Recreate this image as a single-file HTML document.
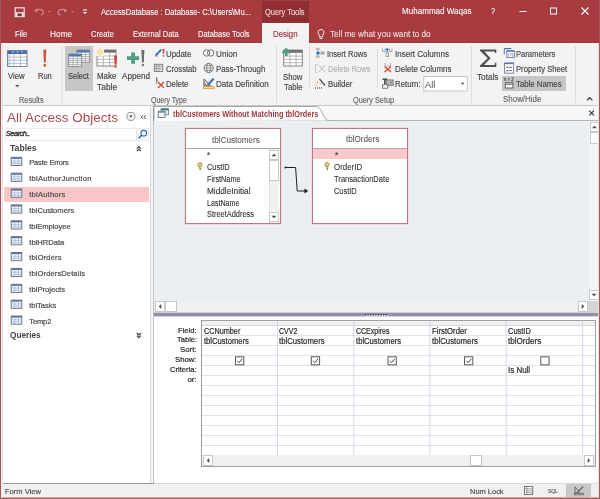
<!DOCTYPE html>
<html><head><meta charset="utf-8">
<style>
*{margin:0;padding:0;box-sizing:border-box}
html,body{width:600px;height:499px;overflow:hidden;background:#fff;font-family:"Liberation Sans",sans-serif;color:#333;position:relative}
.a{position:absolute}
.t{position:absolute;white-space:pre;line-height:1;transform-origin:0 0}
svg{position:absolute;overflow:visible}

</style></head><body>
<div class="a" style="left:0px;top:0px;width:600px;height:43px;background:#a73b3f;"></div>
<div class="a" style="left:262px;top:1px;width:47px;height:22px;background:#8f2f33;"></div>
<div class="a" style="left:262px;top:23px;width:47px;height:20px;background:#f3f3f3;"></div>
<div class="a" style="left:0px;top:43px;width:600px;height:62px;background:#f3f3f3;"></div>
<div class="a" style="left:0px;top:105px;width:600px;height:1px;background:#c8c8c8;"></div>
<div class="a" style="left:65px;top:46px;width:28px;height:45px;background:#c6c6c6;"></div>
<div class="a" style="left:502px;top:76px;width:64px;height:15px;background:#c6c6c6;"></div>
<div class="a" style="left:2px;top:106px;width:148px;height:378px;background:#fff;"></div>
<div class="a" style="left:150px;top:106px;width:1px;height:378px;background:#d4d4d4;"></div>
<div class="a" style="left:151px;top:106px;width:2px;height:378px;background:#f4f4f4;"></div>
<div class="a" style="left:153px;top:106px;width:1px;height:15px;background:#8c8c8c;"></div>
<div class="a" style="left:153px;top:121px;width:1px;height:363px;background:#c4c4c4;"></div>
<div class="a" style="left:4px;top:187px;width:145px;height:15px;background:#f9c6c8;"></div>
<div class="a" style="left:5px;top:128px;width:144px;height:13px;background:#fff;border:1px solid #ececec"></div>
<div class="a" style="left:136px;top:129px;width:12px;height:11px;background:#f7f7f7;border-left:1px solid #e6e6e6"></div>
<div class="a" style="left:154px;top:106px;width:444px;height:15px;background:#f8f8f8;"></div>
<div class="a" style="left:154px;top:120px;width:444px;height:1px;background:#b4b4b4;"></div>
<div class="a" style="left:154px;top:121px;width:435px;height:180px;background:#eceff2;"></div>
<div class="a" style="left:589px;top:121px;width:10px;height:180px;background:#f4f4f4;"></div>
<div class="a" style="left:590px;top:122px;width:10px;height:10px;background:#fff;border:1px solid #c8c8c8"></div>
<div class="a" style="left:590px;top:132px;width:10px;height:12px;background:#fff;border:1px solid #c8c8c8"></div>
<div class="a" style="left:589px;top:290px;width:10px;height:10px;background:#fff;border:1px solid #c8c8c8"></div>
<div class="a" style="left:154px;top:301px;width:435px;height:11px;background:#f0f0f0;"></div>
<div class="a" style="left:155px;top:301px;width:10px;height:11px;background:#fff;border:1px solid #c8c8c8"></div>
<div class="a" style="left:165px;top:301px;width:12px;height:11px;background:#fff;border:1px solid #c8c8c8"></div>
<div class="a" style="left:578px;top:301px;width:10px;height:11px;background:#fff;border:1px solid #c8c8c8"></div>
<div class="a" style="left:588px;top:301px;width:10px;height:11px;background:#d4d4d4;"></div>
<div class="a" style="left:154px;top:312px;width:444px;height:1px;background:#cfcddc;"></div>
<div class="a" style="left:154px;top:313px;width:444px;height:3px;background:#928fab;"></div>
<div class="a" style="left:154px;top:316px;width:444px;height:1px;background:#d2d0de;"></div>
<div class="a" style="left:154px;top:317px;width:444px;height:167px;background:#fff;"></div>
<div class="a" style="left:185px;top:128px;width:96px;height:96px;background:#fff;border:1px solid #b07c80;box-shadow:0 0 0 1px #f3dcdc"></div>
<div class="a" style="left:186px;top:148px;width:94px;height:1px;background:#a8a8a8;"></div>
<div class="a" style="left:312px;top:128px;width:96px;height:96px;background:#fff;border:1px solid #b07c80;box-shadow:0 0 0 1px #f3dcdc"></div>
<div class="a" style="left:313px;top:148px;width:94px;height:1px;background:#a8a8a8;"></div>
<div class="a" style="left:313px;top:149px;width:94px;height:10px;background:#fbc9cb;"></div>
<div class="a" style="left:269px;top:149px;width:10px;height:74px;background:#f2f2f2;border-left:1px solid #e0e0e0"></div>
<div class="a" style="left:269px;top:150px;width:10px;height:10px;background:#fff;border:1px solid #c8c8c8"></div>
<div class="a" style="left:269px;top:160px;width:10px;height:21px;background:#fff;border:1px solid #c8c8c8"></div>
<div class="a" style="left:269px;top:212px;width:10px;height:10px;background:#fff;border:1px solid #c8c8c8"></div>
<div class="a" style="left:201px;top:320px;width:395px;height:147px;background:#fff;border:1px solid #a0a0a0"></div>
<div class="a" style="left:202px;top:321px;width:393px;height:5px;background:#f0f0f0;"></div>
<div class="a" style="left:202px;top:325px;width:393px;height:1px;background:#d6d6de;"></div>
<div class="a" style="left:202px;top:455px;width:393px;height:11px;background:#f0f0f0;"></div>
<div class="a" style="left:203px;top:455px;width:10px;height:11px;background:#fff;border:1px solid #c8c8c8"></div>
<div class="a" style="left:470px;top:455px;width:12px;height:11px;background:#fff;border:1px solid #c8c8c8"></div>
<div class="a" style="left:584px;top:455px;width:10px;height:11px;background:#fff;border:1px solid #c8c8c8"></div>
<div class="a" style="left:0px;top:483px;width:154px;height:1px;background:#9a9a9a;"></div>
<div class="a" style="left:154px;top:483px;width:446px;height:1px;background:#d8d8d8;"></div>
<div class="a" style="left:0px;top:484px;width:600px;height:14px;background:#f0f0f0;"></div>
<div class="a" style="left:566px;top:484px;width:25px;height:14px;background:#c8c8c8;"></div>
<div class="a" style="left:0px;top:498px;width:600px;height:1px;background:#a3585d;"></div>
<div class="a" style="left:0px;top:497px;width:600px;height:1px;background:#d9a9ab;"></div>
<div class="a" style="left:2px;top:43px;width:1px;height:441px;background:#e4e4e4;"></div>
<div class="a" style="left:1px;top:43px;width:1px;height:455px;background:#f6eeee;"></div>
<div class="a" style="left:0px;top:0px;width:1px;height:499px;background:#a3585d;"></div>
<div class="a" style="left:598px;top:43px;width:1px;height:455px;background:#f0dede;"></div>
<div class="a" style="left:599px;top:0px;width:1px;height:499px;background:#a3585d;"></div>
<svg width="600" height="499" style="left:0;top:0;will-change:transform"><rect x="15.2" y="7.8" width="9" height="8.8" fill="none" stroke="#f4e4e4" stroke-width="1.2"/><rect x="15.8" y="12.2" width="7.8" height="4" fill="#f8eeee"/><rect x="17.4" y="13.4" width="4.4" height="2.8" fill="#7a3a3c"/><path d="M35.2 10.6 C38 8.6 42.5 9 43.3 11.6 C43.8 13.3 42.6 14.6 41 15.3" fill="none" stroke="#d68587" stroke-width="1.2"/><path d="M34 10.8 L37.6 8.6 L37.2 12.6z" fill="#d68587"/><path d="M48 11 h2.6 l-1.3 1.4z" fill="#d68587"/><path d="M66.3 10.6 C63.5 8.6 59 9 58.2 11.6 C57.7 13.3 58.9 14.6 60.5 15.3" fill="none" stroke="#d68587" stroke-width="1.2"/><path d="M67.5 10.8 L63.9 8.6 L64.3 12.6z" fill="#d68587"/><path d="M71.3 11 h2.6 l-1.3 1.4z" fill="#d68587"/><path d="M83 10 h4" stroke="#fff" stroke-width="1"/><path d="M83 12 h4 l-2 2z" fill="#fff"/><path d="M519.5 11.5 h7" stroke="#fff" stroke-width="1"/><rect x="550.5" y="8" width="6" height="6" fill="none" stroke="#fff" stroke-width="1"/><path d="M581.5 7.5 l7 7 M588.5 7.5 l-7 7" stroke="#fff" stroke-width="1.1"/><path d="M321 29.5 a3 3 0 0 1 2.2 5 l-0.6 1.2 v1.3 h-3.2 v-1.3 l-0.6 -1.2 a3 3 0 0 1 2.2 -5z M319.6 38.5 h2.8" fill="none" stroke="#fff" stroke-width="0.9"/><path d="M62 46 V103" stroke="#dcdcdc" stroke-width="1"/><path d="M276.5 46 V103" stroke="#dcdcdc" stroke-width="1"/><path d="M309.5 46 V87" stroke="#dcdcdc" stroke-width="1"/><path d="M471.5 46 V103" stroke="#dcdcdc" stroke-width="1"/><path d="M575.5 46 V103" stroke="#dcdcdc" stroke-width="1"/><path d="M377.5 49 V88" stroke="#dcdcdc" stroke-width="1"/><rect x="7.5" y="50.5" width="19.5" height="16" fill="#fff"/><rect x="7.5" y="54.0" width="3" height="12.5" fill="#d5e1f0"/><rect x="7.5" y="50.5" width="19.5" height="3.5" fill="#4a6ea8"/><path d="M7.5 57.12 H27.0" stroke="#a4b0c4" stroke-width="0.8"/><path d="M7.5 60.25 H27.0" stroke="#a4b0c4" stroke-width="0.8"/><path d="M7.5 63.38 H27.0" stroke="#a4b0c4" stroke-width="0.8"/><path d="M14.00 54.0 V66.5" stroke="#a4b0c4" stroke-width="0.8"/><path d="M20.50 54.0 V66.5" stroke="#a4b0c4" stroke-width="0.8"/><rect x="7.5" y="50.5" width="19.5" height="16" fill="none" stroke="#6c7c96" stroke-width="0.9"/><path d="M12 51.5 h2 l-1 1.2z M16.5 51.5 h2 l-1 1.2z M21 51.5 h2 l-1 1.2z" fill="#fff"/><path d="M15.2 84.9 h4.2 l-2.1 2.5z" fill="#555"/><path d="M43.3 49.8 h3 l-0.6 12.8 h-1.8z" fill="#d35230"/><circle cx="44.8" cy="65.3" r="1.4" fill="#d35230"/><rect x="77" y="50" width="12.7" height="12.3" fill="#fff"/><rect x="77" y="50" width="12.7" height="2.6" fill="#4677bd"/><path d="M77 54.54 H89.7" stroke="#a2a2a2" stroke-width="0.8"/><path d="M77 56.48 H89.7" stroke="#a2a2a2" stroke-width="0.8"/><path d="M77 58.42 H89.7" stroke="#a2a2a2" stroke-width="0.8"/><path d="M77 60.36 H89.7" stroke="#a2a2a2" stroke-width="0.8"/><path d="M81.23 52.6 V62.3" stroke="#a2a2a2" stroke-width="0.8"/><path d="M85.47 52.6 V62.3" stroke="#a2a2a2" stroke-width="0.8"/><rect x="77" y="50" width="12.7" height="12.3" fill="none" stroke="#858585" stroke-width="0.9"/><rect x="68.7" y="54" width="13" height="12.5" fill="#fff"/><rect x="68.7" y="54" width="13" height="2.6" fill="#4677bd"/><path d="M68.7 58.58 H81.7" stroke="#a2a2a2" stroke-width="0.8"/><path d="M68.7 60.56 H81.7" stroke="#a2a2a2" stroke-width="0.8"/><path d="M68.7 62.54 H81.7" stroke="#a2a2a2" stroke-width="0.8"/><path d="M68.7 64.52 H81.7" stroke="#a2a2a2" stroke-width="0.8"/><path d="M73.03 56.6 V66.5" stroke="#a2a2a2" stroke-width="0.8"/><path d="M77.37 56.6 V66.5" stroke="#a2a2a2" stroke-width="0.8"/><rect x="68.7" y="54" width="13" height="12.5" fill="none" stroke="#858585" stroke-width="0.9"/><rect x="97" y="50" width="19" height="16" fill="#fff"/><rect x="97" y="50" width="19" height="2.6" fill="#6e6e6e"/><path d="M97 55.95 H116" stroke="#a6a6a6" stroke-width="0.8"/><path d="M97 59.30 H116" stroke="#a6a6a6" stroke-width="0.8"/><path d="M97 62.65 H116" stroke="#a6a6a6" stroke-width="0.8"/><path d="M103.33 52.6 V66" stroke="#a6a6a6" stroke-width="0.8"/><path d="M109.67 52.6 V66" stroke="#a6a6a6" stroke-width="0.8"/><rect x="97" y="50" width="19" height="16" fill="none" stroke="#7c7c7c" stroke-width="0.9"/><rect x="95.5" y="47.5" width="8.6" height="8.6" fill="#f3f3f3"/><circle cx="100.1" cy="51.9" r="2.3" fill="#f6e4a0"/><path d="M100.1 48 V55.8 M96.2 51.9 H104 M97.4 49.2 L102.8 54.6 M102.8 49.2 L97.4 54.6" stroke="#efd98c" stroke-width="1"/><circle cx="100.1" cy="51.9" r="1.3" fill="#fbeec0"/><path d="M114 55.6 h3.1 l-0.6 9 h-1.9z" fill="#cf4a32"/><circle cx="115.5" cy="66.6" r="1.2" fill="#cf4a32"/><path d="M131.2 52.5 h3.8 v3.8 h4.1 v3.7 h-4.1 v3.7 h-3.8 v-3.7 h-4.2 v-3.7 h4.2z" fill="#4e9d80"/><path d="M141.4 50 h3 l-0.6 12.6 h-1.8z" fill="#6d6d6d"/><circle cx="142.9" cy="65.1" r="1.2" fill="#6d6d6d"/><path d="M154.5 57 L158 53.5 L158 57z" fill="#c8c8c8"/><path d="M155.5 55.5 L161.3 49.6" stroke="#3a6fbf" stroke-width="1.8"/><path d="M162.5 49 h2 l-0.4 4.8 h-1.2z" fill="#e04040"/><circle cx="163.5" cy="55.8" r="0.9" fill="#e04040"/><rect x="154.3" y="64.3" width="8.4" height="7.2" fill="#e8e8e8" stroke="#7b7b7b" stroke-width="0.9"/><path d="M154.3 66.2 H162.7 M156.4 64.3 V71.5 M158.9 64.3 V71.5 M154.3 68.7 H162.7" stroke="#8a8a8a" stroke-width="0.7"/><path d="M156 77.5 h1.4 v4.7 h-1.4z" fill="#707070"/><circle cx="156.7" cy="83.5" r="0.7" fill="#707070"/><path d="M158 82 L164 88 M164 82 L158 88" stroke="#d6452f" stroke-width="1.3"/><circle cx="206.6" cy="53" r="3.2" fill="none" stroke="#777" stroke-width="1"/><circle cx="210.7" cy="53" r="3.2" fill="none" stroke="#777" stroke-width="1"/><circle cx="208.7" cy="68" r="4.6" fill="none" stroke="#777" stroke-width="0.9"/><ellipse cx="208.7" cy="68" rx="2" ry="4.6" fill="none" stroke="#777" stroke-width="0.8"/><path d="M204.1 68 H213.3 M205 65.5 H212.4 M205 70.5 H212.4" stroke="#777" stroke-width="0.7"/><path d="M204 86 V79 L210.5 86z M204 82.5 L207 86" fill="none" stroke="#555" stroke-width="1"/><path d="M207.6 85 L213.6 78.8" stroke="#2f5f9f" stroke-width="2.2"/><path d="M207.6 85 L213.6 78.8" stroke="#5a90d0" stroke-width="1"/><rect x="203.6" y="86.6" width="10.6" height="2" fill="#f6d8b0" stroke="#e39a48" stroke-width="0.9"/><rect x="283.7" y="50" width="18.6" height="16" fill="#fff"/><rect x="283.7" y="50" width="18.6" height="2.8" fill="#6e6e6e"/><path d="M283.7 56.10 H302.3" stroke="#a6a6a6" stroke-width="0.8"/><path d="M283.7 59.40 H302.3" stroke="#a6a6a6" stroke-width="0.8"/><path d="M283.7 62.70 H302.3" stroke="#a6a6a6" stroke-width="0.8"/><path d="M289.90 52.8 V66" stroke="#a6a6a6" stroke-width="0.8"/><path d="M296.10 52.8 V66" stroke="#a6a6a6" stroke-width="0.8"/><rect x="283.7" y="50" width="18.6" height="16" fill="none" stroke="#7c7c7c" stroke-width="0.9"/><path d="M285 48.3 h2.6 v2.6 h2.6 v2.6 h-2.6 v2.6 h-2.6 v-2.6 h-2.7 v-2.6 h2.7z" fill="#4e9d80"/><rect x="316" y="47.8" width="3.6" height="2.6" fill="#b8b8b8"/><rect x="316" y="55.3" width="3.6" height="2.6" fill="#b8b8b8"/><rect x="320.5" y="51.5" width="4" height="3" fill="#a8a8a8"/><path d="M318 50.8 l2 2.2 l-2 2.2 l-2 -2.2z" fill="#2f6fc0"/><path d="M317.5 64.5 h-2 v8 h2" fill="none" stroke="#c4c4c4" stroke-width="1"/><path d="M319 65 L325 72 M325 65 L319 72" stroke="#c0c0c0" stroke-width="1"/><path d="M319.5 79 L325 85.5" stroke="#555" stroke-width="1.4"/><path d="M316.5 82.5 l1 -1 l1 1 l-1 1z M315.5 85 l0.8 -0.8 l0.8 0.8 l-0.8 0.8z M319.5 84 l0.8 -0.8 l0.8 0.8 l-0.8 0.8z" fill="#e88a3a"/><path d="M315 88 H322" stroke="#333" stroke-width="1" stroke-dasharray="1 1"/><path d="M382.5 48.5 v3 h2.5 v-3 M389.5 48.5 v3 h2.5 v-3" fill="none" stroke="#999" stroke-width="0.9"/><path d="M387.2 47.8 l-1.8 2.2 h3.6z" fill="#2f6fc0"/><rect x="386.5" y="50" width="1.4" height="1.8" fill="#2f6fc0"/><rect x="386" y="52.8" width="2.6" height="3.6" fill="none" stroke="#888" stroke-width="0.8"/><path d="M385 63 v3 h5.5 v-3" fill="none" stroke="#aaa" stroke-width="0.9"/><path d="M384.5 66.5 L391 72 M391 66.5 L384.5 72" stroke="#d6452f" stroke-width="1.3"/><path d="M382.6 79.2 h4.6 M384.9 79.2 v4.8" stroke="#444" stroke-width="1.6"/><rect x="386.8" y="80" width="6.2" height="5.2" fill="#e6e6e6" stroke="#555" stroke-width="0.9"/><path d="M388.6 81.6 v2.2 M390 81.6 h1.4 v2.2 h-1.4z" fill="none" stroke="#555" stroke-width="0.6"/><rect x="382.6" y="84.8" width="5.2" height="3.4" fill="#fff" stroke="#666" stroke-width="0.9"/><rect x="423.8" y="76.5" width="43.5" height="14.5" fill="#fff" stroke="#c6c6c6" stroke-width="1"/><path d="M460.8 82.8 h3.6 l-1.8 2z" fill="#444"/><path d="M480 49.4 H496.3 V53 H495.2 L494.6 51.4 H484.4 L490.5 58.2 L484 64.9 H494.6 L495.2 62.8 H496.3 V66.9 H480 V65.5 L487.7 58.2 L480 50.7z" fill="#505050"/><path d="M504.3 54.5 V48.6 H511.2" fill="none" stroke="#6f7a8c" stroke-width="1"/><path d="M504.3 48.6 H511.2" stroke="#4a78b8" stroke-width="1.2"/><rect x="506.8" y="51" width="7.6" height="6.4" fill="#fafbfd" stroke="#6f7a8c" stroke-width="0.9"/><path d="M506.8 51 H514.4" stroke="#4a78b8" stroke-width="1.3"/><path d="M508.6 53.2 q-0.8 1.6 0 3.3 M512.6 53.2 q0.8 1.6 0 3.3 M509.9 53.8 q0.7 -0.6 1.4 0 q0.3 0.7 -0.7 1.2 v0.6" fill="none" stroke="#3a6fb8" stroke-width="0.6"/><rect x="504.6" y="63.1" width="9" height="10.1" fill="#fbfbfb" stroke="#6f7a8c" stroke-width="0.9"/><path d="M504.6 63.4 H513.6" stroke="#4a78b8" stroke-width="1.4"/><path d="M506.6 67.4 h1.2 M506.6 70.6 h1.2" stroke="#333" stroke-width="1.1"/><path d="M508.6 67.4 h3.4 M508.6 70.6 h3.4" stroke="#555" stroke-width="0.8"/><path d="M504 77.8 l2 3 M506 77.8 l-2 3 M507.8 77.8 l1 1.5 l1 -1.5 M508.8 79.3 v1.5 M511.5 77.8 h2.2 l-2.2 3 h2.2" fill="none" stroke="#444" stroke-width="0.7"/><rect x="505.3" y="82.7" width="7.6" height="5.3" fill="#fff" stroke="#555" stroke-width="0.9"/><path d="M505.3 84.2 h7.6" stroke="#555" stroke-width="1"/><path d="M587 100.4 L589.7 97.7 L592.4 100.4" fill="none" stroke="#3a3a3a" stroke-width="1.3"/><circle cx="130.9" cy="116.4" r="4.1" fill="#f4f4f4" stroke="#8a8a8a" stroke-width="0.9"/><path d="M129 115.4 h3.8 l-1.9 2.2z" fill="#444"/><path d="M143.2 115.3 l-2.2 1.9 l2.2 1.9 M146 115.3 l-2.2 1.9 l2.2 1.9" fill="none" stroke="#444" stroke-width="0.9"/><circle cx="143.8" cy="133.2" r="2.8" fill="none" stroke="#2e6db4" stroke-width="1.1"/><path d="M141.8 135.2 L138.5 138.3" stroke="#2e6db4" stroke-width="1.5"/><path d="M136.8 148.6 l2 -2 l2 2 M136.8 151.2 l2 -2 l2 2" fill="none" stroke="#333" stroke-width="1.15"/><path d="M136.8 333 l2 2 l2 -2 M136.8 335.6 l2 2 l2 -2" fill="none" stroke="#333" stroke-width="1.15"/><rect x="11.2" y="157.3" width="10.6" height="8.2" fill="#f2f5fb"/><rect x="11.2" y="157.3" width="10.6" height="1.6" fill="#66789a"/><path d="M11.2 161.10 H21.799999999999997" stroke="#a9b8d6" stroke-width="0.8"/><path d="M11.2 163.30 H21.799999999999997" stroke="#a9b8d6" stroke-width="0.8"/><path d="M14.73 158.9 V165.5" stroke="#a9b8d6" stroke-width="0.8"/><path d="M18.27 158.9 V165.5" stroke="#a9b8d6" stroke-width="0.8"/><rect x="11.2" y="157.3" width="10.6" height="8.2" fill="none" stroke="#5d6d8c" stroke-width="0.9"/><rect x="11.2" y="173.17000000000002" width="10.6" height="8.2" fill="#f2f5fb"/><rect x="11.2" y="173.17000000000002" width="10.6" height="1.6" fill="#66789a"/><path d="M11.2 176.97 H21.799999999999997" stroke="#a9b8d6" stroke-width="0.8"/><path d="M11.2 179.17 H21.799999999999997" stroke="#a9b8d6" stroke-width="0.8"/><path d="M14.73 174.77 V181.37" stroke="#a9b8d6" stroke-width="0.8"/><path d="M18.27 174.77 V181.37" stroke="#a9b8d6" stroke-width="0.8"/><rect x="11.2" y="173.17000000000002" width="10.6" height="8.2" fill="none" stroke="#5d6d8c" stroke-width="0.9"/><rect x="11.2" y="189.04000000000002" width="10.6" height="8.2" fill="#f2f5fb"/><rect x="11.2" y="189.04000000000002" width="10.6" height="1.6" fill="#66789a"/><path d="M11.2 192.84 H21.799999999999997" stroke="#a9b8d6" stroke-width="0.8"/><path d="M11.2 195.04 H21.799999999999997" stroke="#a9b8d6" stroke-width="0.8"/><path d="M14.73 190.64000000000001 V197.24" stroke="#a9b8d6" stroke-width="0.8"/><path d="M18.27 190.64000000000001 V197.24" stroke="#a9b8d6" stroke-width="0.8"/><rect x="11.2" y="189.04000000000002" width="10.6" height="8.2" fill="none" stroke="#5d6d8c" stroke-width="0.9"/><rect x="11.2" y="204.91000000000003" width="10.6" height="8.2" fill="#f2f5fb"/><rect x="11.2" y="204.91000000000003" width="10.6" height="1.6" fill="#66789a"/><path d="M11.2 208.71 H21.799999999999997" stroke="#a9b8d6" stroke-width="0.8"/><path d="M11.2 210.91 H21.799999999999997" stroke="#a9b8d6" stroke-width="0.8"/><path d="M14.73 206.51000000000002 V213.11" stroke="#a9b8d6" stroke-width="0.8"/><path d="M18.27 206.51000000000002 V213.11" stroke="#a9b8d6" stroke-width="0.8"/><rect x="11.2" y="204.91000000000003" width="10.6" height="8.2" fill="none" stroke="#5d6d8c" stroke-width="0.9"/><rect x="11.2" y="220.78" width="10.6" height="8.2" fill="#f2f5fb"/><rect x="11.2" y="220.78" width="10.6" height="1.6" fill="#66789a"/><path d="M11.2 224.58 H21.799999999999997" stroke="#a9b8d6" stroke-width="0.8"/><path d="M11.2 226.78 H21.799999999999997" stroke="#a9b8d6" stroke-width="0.8"/><path d="M14.73 222.38 V228.98" stroke="#a9b8d6" stroke-width="0.8"/><path d="M18.27 222.38 V228.98" stroke="#a9b8d6" stroke-width="0.8"/><rect x="11.2" y="220.78" width="10.6" height="8.2" fill="none" stroke="#5d6d8c" stroke-width="0.9"/><rect x="11.2" y="236.65" width="10.6" height="8.2" fill="#f2f5fb"/><rect x="11.2" y="236.65" width="10.6" height="1.6" fill="#66789a"/><path d="M11.2 240.45 H21.799999999999997" stroke="#a9b8d6" stroke-width="0.8"/><path d="M11.2 242.65 H21.799999999999997" stroke="#a9b8d6" stroke-width="0.8"/><path d="M14.73 238.25 V244.85" stroke="#a9b8d6" stroke-width="0.8"/><path d="M18.27 238.25 V244.85" stroke="#a9b8d6" stroke-width="0.8"/><rect x="11.2" y="236.65" width="10.6" height="8.2" fill="none" stroke="#5d6d8c" stroke-width="0.9"/><rect x="11.2" y="252.52" width="10.6" height="8.2" fill="#f2f5fb"/><rect x="11.2" y="252.52" width="10.6" height="1.6" fill="#66789a"/><path d="M11.2 256.32 H21.799999999999997" stroke="#a9b8d6" stroke-width="0.8"/><path d="M11.2 258.52 H21.799999999999997" stroke="#a9b8d6" stroke-width="0.8"/><path d="M14.73 254.12 V260.72" stroke="#a9b8d6" stroke-width="0.8"/><path d="M18.27 254.12 V260.72" stroke="#a9b8d6" stroke-width="0.8"/><rect x="11.2" y="252.52" width="10.6" height="8.2" fill="none" stroke="#5d6d8c" stroke-width="0.9"/><rect x="11.2" y="268.39" width="10.6" height="8.2" fill="#f2f5fb"/><rect x="11.2" y="268.39" width="10.6" height="1.6" fill="#66789a"/><path d="M11.2 272.19 H21.799999999999997" stroke="#a9b8d6" stroke-width="0.8"/><path d="M11.2 274.39 H21.799999999999997" stroke="#a9b8d6" stroke-width="0.8"/><path d="M14.73 269.99 V276.59" stroke="#a9b8d6" stroke-width="0.8"/><path d="M18.27 269.99 V276.59" stroke="#a9b8d6" stroke-width="0.8"/><rect x="11.2" y="268.39" width="10.6" height="8.2" fill="none" stroke="#5d6d8c" stroke-width="0.9"/><rect x="11.2" y="284.26" width="10.6" height="8.2" fill="#f2f5fb"/><rect x="11.2" y="284.26" width="10.6" height="1.6" fill="#66789a"/><path d="M11.2 288.06 H21.799999999999997" stroke="#a9b8d6" stroke-width="0.8"/><path d="M11.2 290.26 H21.799999999999997" stroke="#a9b8d6" stroke-width="0.8"/><path d="M14.73 285.86 V292.46" stroke="#a9b8d6" stroke-width="0.8"/><path d="M18.27 285.86 V292.46" stroke="#a9b8d6" stroke-width="0.8"/><rect x="11.2" y="284.26" width="10.6" height="8.2" fill="none" stroke="#5d6d8c" stroke-width="0.9"/><rect x="11.2" y="300.13" width="10.6" height="8.2" fill="#f2f5fb"/><rect x="11.2" y="300.13" width="10.6" height="1.6" fill="#66789a"/><path d="M11.2 303.93 H21.799999999999997" stroke="#a9b8d6" stroke-width="0.8"/><path d="M11.2 306.13 H21.799999999999997" stroke="#a9b8d6" stroke-width="0.8"/><path d="M14.73 301.73 V308.33" stroke="#a9b8d6" stroke-width="0.8"/><path d="M18.27 301.73 V308.33" stroke="#a9b8d6" stroke-width="0.8"/><rect x="11.2" y="300.13" width="10.6" height="8.2" fill="none" stroke="#5d6d8c" stroke-width="0.9"/><rect x="11.2" y="316.0" width="10.6" height="8.2" fill="#f2f5fb"/><rect x="11.2" y="316.0" width="10.6" height="1.6" fill="#66789a"/><path d="M11.2 319.80 H21.799999999999997" stroke="#a9b8d6" stroke-width="0.8"/><path d="M11.2 322.00 H21.799999999999997" stroke="#a9b8d6" stroke-width="0.8"/><path d="M14.73 317.6 V324.2" stroke="#a9b8d6" stroke-width="0.8"/><path d="M18.27 317.6 V324.2" stroke="#a9b8d6" stroke-width="0.8"/><rect x="11.2" y="316.0" width="10.6" height="8.2" fill="none" stroke="#5d6d8c" stroke-width="0.9"/><path d="M154 121 V106.5 H316.5 Q319 106.5 320.5 109.5 L325 118 Q326.2 120.5 329 120.5" fill="#fff" stroke="#a8a8a8" stroke-width="1"/><rect x="161" y="108.7" width="7.5" height="6.2" fill="#dfe9ec" stroke="#4a8478" stroke-width="0.8"/><rect x="161" y="108.7" width="7.5" height="1.6" fill="#3b7a6e"/><rect x="158.2" y="111.2" width="6.8" height="6.4" fill="#eef3f6" stroke="#5a6a7a" stroke-width="0.8"/><rect x="158.2" y="111.2" width="6.8" height="1.5" fill="#6a8a9a"/><path d="M589.3 110.7 l4.6 4.6 M593.9 110.7 l-4.6 4.6" stroke="#333" stroke-width="1.1"/><path d="M591.9 128.3 h5.2 l-2.6 -2.6z" fill="#505050"/><path d="M591.4 293.7 h5.2 l-2.6 2.6z" fill="#505050"/><path d="M161.3 303.9 v5.2 l-2.6 -2.6z" fill="#505050"/><path d="M581.7 303.9 v5.2 l2.6 -2.6z" fill="#505050"/><path d="M271.4 156.3 h5.2 l-2.6 -2.6z" fill="#505050"/><path d="M271.4 215.7 h5.2 l-2.6 2.6z" fill="#505050"/><path d="M209.3 457.9 v5.2 l-2.6 -2.6z" fill="#505050"/><path d="M587.7 457.9 v5.2 l2.6 -2.6z" fill="#505050"/><circle cx="199.9" cy="164.8" r="2.1" fill="#e8d070" stroke="#8a7a30" stroke-width="0.7"/><path d="M199.9 166.8 V170.0 M199.9 168.5 h1.2 M199.9 169.8 h1" stroke="#8a7a30" stroke-width="0.9"/><circle cx="327.0" cy="164.60000000000002" r="2.1" fill="#e8d070" stroke="#8a7a30" stroke-width="0.7"/><path d="M327.0 166.60000000000002 V169.8 M327.0 168.3 h1.2 M327.0 169.60000000000002 h1" stroke="#8a7a30" stroke-width="0.9"/><path d="M285 167.5 H295.6 L297.2 191 H305" fill="none" stroke="#1e1e1e" stroke-width="1"/><path d="M304.5 188.4 L308.3 191 L304.5 193.6z" fill="#1e1e1e"/><rect x="284.6" y="166.6" width="1.6" height="1.8" fill="#1e1e1e"/><path d="M202 335.5 H595" stroke="#dfe1ec" stroke-width="1"/><path d="M202 345.5 H595" stroke="#dfe1ec" stroke-width="1"/><path d="M202 355.5 H595" stroke="#dfe1ec" stroke-width="1"/><path d="M202 365.5 H595" stroke="#dfe1ec" stroke-width="1"/><path d="M202 375.5 H595" stroke="#dfe1ec" stroke-width="1"/><path d="M202 385.5 H595" stroke="#dfe1ec" stroke-width="1"/><path d="M202 395.5 H595" stroke="#dfe1ec" stroke-width="1"/><path d="M202 405.5 H595" stroke="#dfe1ec" stroke-width="1"/><path d="M202 415.5 H595" stroke="#dfe1ec" stroke-width="1"/><path d="M202 425.5 H595" stroke="#dfe1ec" stroke-width="1"/><path d="M202 435.5 H595" stroke="#dfe1ec" stroke-width="1"/><path d="M202 445.5 H595" stroke="#dfe1ec" stroke-width="1"/><path d="M277.5 321 V455" stroke="#d0d3e4" stroke-width="0.9"/><path d="M353.8 321 V455" stroke="#d0d3e4" stroke-width="0.9"/><path d="M430 321 V455" stroke="#d0d3e4" stroke-width="0.9"/><path d="M506.2 321 V455" stroke="#d0d3e4" stroke-width="0.9"/><path d="M582.7 321 V455" stroke="#d0d3e4" stroke-width="0.9"/><rect x="235.5" y="356.8" width="8.3" height="8" fill="#fff" stroke="#5a5a5a" stroke-width="1"/><path d="M237.2 360.8 L239.0 362.7 L242.3 358.8" fill="none" stroke="#444" stroke-width="1"/><rect x="311.3" y="356.8" width="8.3" height="8" fill="#fff" stroke="#5a5a5a" stroke-width="1"/><path d="M313.0 360.8 L314.8 362.7 L318.1 358.8" fill="none" stroke="#444" stroke-width="1"/><rect x="388" y="356.8" width="8.3" height="8" fill="#fff" stroke="#5a5a5a" stroke-width="1"/><path d="M389.7 360.8 L391.5 362.7 L394.8 358.8" fill="none" stroke="#444" stroke-width="1"/><rect x="464.5" y="356.8" width="8.3" height="8" fill="#fff" stroke="#5a5a5a" stroke-width="1"/><path d="M466.2 360.8 L468.0 362.7 L471.3 358.8" fill="none" stroke="#444" stroke-width="1"/><rect x="540.8" y="356.8" width="8.3" height="8" fill="#fff" stroke="#5a5a5a" stroke-width="1"/><rect x="365.0" y="314" width="1.2" height="1.2" fill="#2e2e3e"/><rect x="366.0" y="315.1" width="1.2" height="1" fill="#fff"/><rect x="367.6" y="314" width="1.2" height="1.2" fill="#2e2e3e"/><rect x="368.6" y="315.1" width="1.2" height="1" fill="#fff"/><rect x="370.2" y="314" width="1.2" height="1.2" fill="#2e2e3e"/><rect x="371.2" y="315.1" width="1.2" height="1" fill="#fff"/><rect x="372.8" y="314" width="1.2" height="1.2" fill="#2e2e3e"/><rect x="373.8" y="315.1" width="1.2" height="1" fill="#fff"/><rect x="375.4" y="314" width="1.2" height="1.2" fill="#2e2e3e"/><rect x="376.4" y="315.1" width="1.2" height="1" fill="#fff"/><rect x="378.0" y="314" width="1.2" height="1.2" fill="#2e2e3e"/><rect x="379.0" y="315.1" width="1.2" height="1" fill="#fff"/><rect x="380.6" y="314" width="1.2" height="1.2" fill="#2e2e3e"/><rect x="381.6" y="315.1" width="1.2" height="1" fill="#fff"/><rect x="383.2" y="314" width="1.2" height="1.2" fill="#2e2e3e"/><rect x="384.2" y="315.1" width="1.2" height="1" fill="#fff"/><rect x="385.8" y="314" width="1.2" height="1.2" fill="#2e2e3e"/><rect x="386.8" y="315.1" width="1.2" height="1" fill="#fff"/><rect x="524.5" y="486.6" width="8.2" height="8" fill="#fff" stroke="#666" stroke-width="0.9"/><path d="M526.8 486.6 V494.6 M524.5 488.8 H532.7 M526.8 490.8 H532.7 M526.8 492.7 H532.7" stroke="#777" stroke-width="0.7"/><path d="M575 486.8 V492.5 L579.5 492.5z" fill="none" stroke="#555" stroke-width="0.8"/><path d="M578 491.5 L583.3 486.6" stroke="#555" stroke-width="1.1"/><rect x="574.5" y="493.2" width="9" height="1.6" fill="none" stroke="#555" stroke-width="0.7"/></svg>
<div style="position:absolute;left:0;top:0;width:600px;height:499px;will-change:transform">
<span class='t' style='left:100.60px;top:8.15px;font-size:8.5px;font-weight:400;color:#fff;font-style:normal;transform:scaleX(0.9001);-webkit-text-stroke:0.08px #fff;'>AccessDatabase : Database- C:\Users\Mu...</span>
<span class='t' style='left:265.40px;top:8.15px;font-size:8.5px;font-weight:400;color:#f3d6d6;font-style:normal;transform:scaleX(0.8760);-webkit-text-stroke:0.08px #f3d6d6;'>Query Tools</span>
<span class='t' style='left:401.60px;top:7.15px;font-size:8.5px;font-weight:400;color:#fff;font-style:normal;transform:scaleX(0.9484);-webkit-text-stroke:0.08px #fff;'>Muhammad Waqas</span>
<span class='t' style='left:490.60px;top:7.15px;font-size:8.5px;font-weight:400;color:#fff;font-style:normal;transform:scaleX(0.8660);-webkit-text-stroke:0.08px #fff;'>?</span>
<span class='t' style='left:14.60px;top:29.85px;font-size:8.5px;font-weight:400;color:#fff;font-style:normal;transform:scaleX(0.8976);-webkit-text-stroke:0.08px #fff;'>File</span>
<span class='t' style='left:50.30px;top:29.85px;font-size:8.5px;font-weight:400;color:#fff;font-style:normal;transform:scaleX(0.9785);-webkit-text-stroke:0.08px #fff;'>Home</span>
<span class='t' style='left:91.30px;top:29.85px;font-size:8.5px;font-weight:400;color:#fff;font-style:normal;transform:scaleX(0.8975);-webkit-text-stroke:0.08px #fff;'>Create</span>
<span class='t' style='left:132.90px;top:29.85px;font-size:8.5px;font-weight:400;color:#fff;font-style:normal;transform:scaleX(0.8854);-webkit-text-stroke:0.08px #fff;'>External Data</span>
<span class='t' style='left:197.60px;top:29.85px;font-size:8.5px;font-weight:400;color:#fff;font-style:normal;transform:scaleX(0.8830);-webkit-text-stroke:0.08px #fff;'>Database Tools</span>
<span class='t' style='left:272.60px;top:29.85px;font-size:8.5px;font-weight:400;color:#a4373a;font-style:normal;transform:scaleX(0.9294);-webkit-text-stroke:0.15px #a4373a;'>Design</span>
<span class='t' style='left:329.60px;top:29.85px;font-size:8.5px;font-weight:400;color:#f6e3e3;font-style:normal;transform:scaleX(0.9591);-webkit-text-stroke:0.08px #f6e3e3;'>Tell me what you want to do</span>
<span class='t' style='left:8.40px;top:72.45px;font-size:8.5px;font-weight:400;color:#444;font-style:normal;transform:scaleX(0.9135);-webkit-text-stroke:0.15px #444;'>View</span>
<span class='t' style='left:37.50px;top:72.45px;font-size:8.5px;font-weight:400;color:#444;font-style:normal;transform:scaleX(0.8850);-webkit-text-stroke:0.15px #444;'>Run</span>
<span class='t' style='left:18.60px;top:95.95px;font-size:8.5px;font-weight:400;color:#666;font-style:normal;transform:scaleX(0.8679);-webkit-text-stroke:0.15px #666;'>Results</span>
<span class='t' style='left:67.85px;top:72.45px;font-size:8.5px;font-weight:400;color:#444;font-style:normal;transform:scaleX(0.8825);-webkit-text-stroke:0.15px #444;'>Select</span>
<span class='t' style='left:96.60px;top:72.45px;font-size:8.5px;font-weight:400;color:#444;font-style:normal;transform:scaleX(0.9328);-webkit-text-stroke:0.15px #444;'>Make</span>
<span class='t' style='left:97.10px;top:82.95px;font-size:8.5px;font-weight:400;color:#444;font-style:normal;transform:scaleX(0.9888);-webkit-text-stroke:0.15px #444;'>Table</span>
<span class='t' style='left:121.60px;top:72.45px;font-size:8.5px;font-weight:400;color:#444;font-style:normal;transform:scaleX(0.9586);-webkit-text-stroke:0.15px #444;'>Append</span>
<span class='t' style='left:166.35px;top:49.95px;font-size:8.5px;font-weight:400;color:#444;font-style:normal;transform:scaleX(0.9244);-webkit-text-stroke:0.15px #444;'>Update</span>
<span class='t' style='left:166.35px;top:64.95px;font-size:8.5px;font-weight:400;color:#444;font-style:normal;transform:scaleX(0.8996);-webkit-text-stroke:0.15px #444;'>Crosstab</span>
<span class='t' style='left:166.35px;top:80.25px;font-size:8.5px;font-weight:400;color:#444;font-style:normal;transform:scaleX(0.9093);-webkit-text-stroke:0.15px #444;'>Delete</span>
<span class='t' style='left:215.90px;top:49.95px;font-size:8.5px;font-weight:400;color:#444;font-style:normal;transform:scaleX(0.9586);-webkit-text-stroke:0.15px #444;'>Union</span>
<span class='t' style='left:215.90px;top:64.95px;font-size:8.5px;font-weight:400;color:#444;font-style:normal;transform:scaleX(0.9234);-webkit-text-stroke:0.15px #444;'>Pass-Through</span>
<span class='t' style='left:215.90px;top:80.25px;font-size:8.5px;font-weight:400;color:#444;font-style:normal;transform:scaleX(0.9432);-webkit-text-stroke:0.15px #444;'>Data Definition</span>
<span class='t' style='left:150.60px;top:96.15px;font-size:8.5px;font-weight:400;color:#666;font-style:normal;transform:scaleX(0.8186);-webkit-text-stroke:0.15px #666;'>Query Type</span>
<span class='t' style='left:282.90px;top:72.75px;font-size:8.5px;font-weight:400;color:#444;font-style:normal;transform:scaleX(0.9076);-webkit-text-stroke:0.15px #444;'>Show</span>
<span class='t' style='left:283.60px;top:83.15px;font-size:8.5px;font-weight:400;color:#444;font-style:normal;transform:scaleX(0.9150);-webkit-text-stroke:0.15px #444;'>Table</span>
<span class='t' style='left:327.40px;top:49.95px;font-size:8.5px;font-weight:400;color:#444;font-style:normal;transform:scaleX(0.8925);-webkit-text-stroke:0.15px #444;'>Insert Rows</span>
<span class='t' style='left:327.60px;top:65.25px;font-size:8.5px;font-weight:400;color:#b0b0b0;font-style:normal;transform:scaleX(0.8799);-webkit-text-stroke:0.15px #b0b0b0;'>Delete Rows</span>
<span class='t' style='left:327.60px;top:79.95px;font-size:8.5px;font-weight:400;color:#444;font-style:normal;transform:scaleX(0.9218);-webkit-text-stroke:0.15px #444;'>Builder</span>
<span class='t' style='left:394.60px;top:49.75px;font-size:8.5px;font-weight:400;color:#444;font-style:normal;transform:scaleX(0.9428);-webkit-text-stroke:0.15px #444;'>Insert Columns</span>
<span class='t' style='left:394.60px;top:65.25px;font-size:8.5px;font-weight:400;color:#444;font-style:normal;transform:scaleX(0.9325);-webkit-text-stroke:0.15px #444;'>Delete Columns</span>
<span class='t' style='left:394.60px;top:80.25px;font-size:8.5px;font-weight:400;color:#444;font-style:normal;transform:scaleX(0.9184);-webkit-text-stroke:0.15px #444;'>Return:</span>
<span class='t' style='left:425.40px;top:80.55px;font-size:8.3px;font-weight:400;color:#5a5a5a;font-style:normal;transform:scaleX(1.1154);-webkit-text-stroke:0.05px #5a5a5a;'>All</span>
<span class='t' style='left:352.60px;top:96.15px;font-size:8.5px;font-weight:400;color:#666;font-style:normal;transform:scaleX(0.8610);-webkit-text-stroke:0.15px #666;'>Query Setup</span>
<span class='t' style='left:477.00px;top:72.75px;font-size:8.5px;font-weight:400;color:#444;font-style:normal;transform:scaleX(0.9677);-webkit-text-stroke:0.15px #444;'>Totals</span>
<span class='t' style='left:516.35px;top:50.05px;font-size:8.5px;font-weight:400;color:#444;font-style:normal;transform:scaleX(0.8956);-webkit-text-stroke:0.15px #444;'>Parameters</span>
<span class='t' style='left:516.35px;top:65.35px;font-size:8.5px;font-weight:400;color:#444;font-style:normal;transform:scaleX(0.9038);-webkit-text-stroke:0.15px #444;'>Property Sheet</span>
<span class='t' style='left:516.35px;top:80.45px;font-size:8.5px;font-weight:400;color:#444;font-style:normal;transform:scaleX(0.9192);-webkit-text-stroke:0.15px #444;'>Table Names</span>
<span class='t' style='left:503.30px;top:95.25px;font-size:8.5px;font-weight:400;color:#666;font-style:normal;transform:scaleX(0.9341);-webkit-text-stroke:0.15px #666;'>Show/Hide</span>
<span class='t' style='left:6.90px;top:111.21px;font-size:13.5px;font-weight:400;color:#a94b4f;font-style:normal;'>All Access Objects</span>
<span class='t' style='left:5.80px;top:130.49px;font-size:7.6px;font-weight:400;color:#2a2a2a;font-style:italic;letter-spacing:-0.554px;-webkit-text-stroke:0.3px #2a2a2a;'>Search..</span>
<span class='t' style='left:9.60px;top:144.15px;font-size:8.5px;font-weight:700;color:#444;font-style:normal;transform:scaleX(1.0115);'>Tables</span>
<span class='t' style='left:29.30px;top:159.19px;font-size:7.6px;font-weight:400;color:#4a4a4a;font-style:normal;letter-spacing:-0.237px;-webkit-text-stroke:0.2px #4a4a4a;'>Paste Errors</span>
<span class='t' style='left:29.30px;top:175.06px;font-size:7.6px;font-weight:400;color:#4a4a4a;font-style:normal;letter-spacing:0.213px;-webkit-text-stroke:0.2px #4a4a4a;'>tblAuthorJunction</span>
<span class='t' style='left:29.30px;top:190.93px;font-size:7.6px;font-weight:400;color:#4a4a4a;font-style:normal;letter-spacing:0.200px;-webkit-text-stroke:0.2px #4a4a4a;'>tblAuthors</span>
<span class='t' style='left:29.30px;top:206.80px;font-size:7.6px;font-weight:400;color:#4a4a4a;font-style:normal;letter-spacing:0.024px;-webkit-text-stroke:0.2px #4a4a4a;'>tblCustomers</span>
<span class='t' style='left:29.30px;top:222.67px;font-size:7.6px;font-weight:400;color:#4a4a4a;font-style:normal;letter-spacing:-0.040px;-webkit-text-stroke:0.2px #4a4a4a;'>tblEmployee</span>
<span class='t' style='left:29.30px;top:238.54px;font-size:7.6px;font-weight:400;color:#4a4a4a;font-style:normal;letter-spacing:-0.004px;-webkit-text-stroke:0.2px #4a4a4a;'>tblHRData</span>
<span class='t' style='left:29.30px;top:254.41px;font-size:7.6px;font-weight:400;color:#4a4a4a;font-style:normal;letter-spacing:0.121px;-webkit-text-stroke:0.2px #4a4a4a;'>tblOrders</span>
<span class='t' style='left:29.30px;top:270.28px;font-size:7.6px;font-weight:400;color:#4a4a4a;font-style:normal;letter-spacing:0.083px;-webkit-text-stroke:0.2px #4a4a4a;'>tblOrdersDetails</span>
<span class='t' style='left:29.30px;top:286.15px;font-size:7.6px;font-weight:400;color:#4a4a4a;font-style:normal;letter-spacing:0.025px;-webkit-text-stroke:0.2px #4a4a4a;'>tblProjects</span>
<span class='t' style='left:29.30px;top:302.02px;font-size:7.6px;font-weight:400;color:#4a4a4a;font-style:normal;letter-spacing:-0.077px;-webkit-text-stroke:0.2px #4a4a4a;'>tblTasks</span>
<span class='t' style='left:29.30px;top:317.89px;font-size:7.6px;font-weight:400;color:#4a4a4a;font-style:normal;letter-spacing:-0.174px;-webkit-text-stroke:0.2px #4a4a4a;'>Temp2</span>
<span class='t' style='left:9.60px;top:331.05px;font-size:8.5px;font-weight:700;color:#444;font-style:normal;transform:scaleX(0.9666);'>Queries</span>
<span class='t' style='left:173.30px;top:109.55px;font-size:8.5px;font-weight:700;color:#a4373a;font-style:normal;transform:scaleX(0.8598);'>tblCustomers Without Matching tblOrders</span>
<span class='t' style='left:211.60px;top:135.85px;font-size:8.5px;font-weight:400;color:#555;font-style:normal;transform:scaleX(0.9545);-webkit-text-stroke:0.05px #555;'>tblCustomers</span>
<span class='t' style='left:207.10px;top:151.35px;font-size:8.5px;font-weight:400;color:#444;font-style:normal;transform:scaleX(0.9358);-webkit-text-stroke:0.15px #444;'>*</span>
<span class='t' style='left:206.70px;top:163.35px;font-size:8.3px;font-weight:400;color:#333;font-style:normal;transform:scaleX(0.8912);-webkit-text-stroke:0.1px #333;'>CustID</span>
<span class='t' style='left:206.70px;top:175.35px;font-size:8.3px;font-weight:400;color:#333;font-style:normal;transform:scaleX(0.8755);-webkit-text-stroke:0.1px #333;'>FirstName</span>
<span class='t' style='left:206.70px;top:186.85px;font-size:8.3px;font-weight:400;color:#333;font-style:normal;transform:scaleX(0.9929);-webkit-text-stroke:0.1px #333;'>MiddleInitial</span>
<span class='t' style='left:206.70px;top:198.75px;font-size:8.3px;font-weight:400;color:#333;font-style:normal;transform:scaleX(0.8591);-webkit-text-stroke:0.1px #333;'>LastName</span>
<span class='t' style='left:206.70px;top:210.35px;font-size:8.3px;font-weight:400;color:#333;font-style:normal;transform:scaleX(0.8939);-webkit-text-stroke:0.1px #333;'>StreetAddress</span>
<span class='t' style='left:346.40px;top:135.35px;font-size:8.5px;font-weight:400;color:#555;font-style:normal;transform:scaleX(0.9523);-webkit-text-stroke:0.05px #555;'>tblOrders</span>
<span class='t' style='left:334.80px;top:151.35px;font-size:8.5px;font-weight:400;color:#444;font-style:normal;transform:scaleX(1.0264);-webkit-text-stroke:0.15px #444;'>*</span>
<span class='t' style='left:333.60px;top:163.15px;font-size:8.3px;font-weight:400;color:#333;font-style:normal;transform:scaleX(0.9520);-webkit-text-stroke:0.1px #333;'>OrderID</span>
<span class='t' style='left:333.60px;top:175.05px;font-size:8.3px;font-weight:400;color:#333;font-style:normal;transform:scaleX(0.9145);-webkit-text-stroke:0.1px #333;'>TransactionDate</span>
<span class='t' style='left:333.60px;top:186.85px;font-size:8.3px;font-weight:400;color:#333;font-style:normal;transform:scaleX(0.8912);-webkit-text-stroke:0.1px #333;'>CustID</span>
<span class='t' style='left:178.10px;top:326.69px;font-size:8.0px;font-weight:400;color:#2a2a2a;font-style:normal;transform:scaleX(0.9508);-webkit-text-stroke:0.22px #2a2a2a;'>Field:</span>
<span class='t' style='left:176.60px;top:336.39px;font-size:8.0px;font-weight:400;color:#2a2a2a;font-style:normal;transform:scaleX(0.9410);-webkit-text-stroke:0.22px #2a2a2a;'>Table:</span>
<span class='t' style='left:180.20px;top:346.29px;font-size:8.0px;font-weight:400;color:#2a2a2a;font-style:normal;transform:scaleX(0.9760);-webkit-text-stroke:0.22px #2a2a2a;'>Sort:</span>
<span class='t' style='left:175.20px;top:356.09px;font-size:8.0px;font-weight:400;color:#2a2a2a;font-style:normal;transform:scaleX(0.9670);-webkit-text-stroke:0.22px #2a2a2a;'>Show:</span>
<span class='t' style='left:170.00px;top:365.99px;font-size:8.0px;font-weight:400;color:#2a2a2a;font-style:normal;transform:scaleX(0.9530);-webkit-text-stroke:0.22px #2a2a2a;'>Criteria:</span>
<span class='t' style='left:187.40px;top:376.09px;font-size:8.0px;font-weight:400;color:#2a2a2a;font-style:normal;-webkit-text-stroke:0.22px #2a2a2a;'>or:</span>
<span class='t' style='left:203.70px;top:327.15px;font-size:8.3px;font-weight:400;color:#2a2a2a;font-style:normal;transform:scaleX(0.8747);-webkit-text-stroke:0.2px #2a2a2a;'>CCNumber</span>
<span class='t' style='left:203.70px;top:336.85px;font-size:8.3px;font-weight:400;color:#2a2a2a;font-style:normal;transform:scaleX(0.9187);-webkit-text-stroke:0.2px #2a2a2a;'>tblCustomers</span>
<span class='t' style='left:279.30px;top:327.15px;font-size:8.3px;font-weight:400;color:#2a2a2a;font-style:normal;transform:scaleX(0.8484);-webkit-text-stroke:0.2px #2a2a2a;'>CVV2</span>
<span class='t' style='left:279.30px;top:336.85px;font-size:8.3px;font-weight:400;color:#2a2a2a;font-style:normal;transform:scaleX(0.9330);-webkit-text-stroke:0.2px #2a2a2a;'>tblCustomers</span>
<span class='t' style='left:355.90px;top:327.15px;font-size:8.3px;font-weight:400;color:#2a2a2a;font-style:normal;transform:scaleX(0.8448);-webkit-text-stroke:0.2px #2a2a2a;'>CCExpires</span>
<span class='t' style='left:355.90px;top:336.85px;font-size:8.3px;font-weight:400;color:#2a2a2a;font-style:normal;transform:scaleX(0.9228);-webkit-text-stroke:0.2px #2a2a2a;'>tblCustomers</span>
<span class='t' style='left:431.80px;top:327.15px;font-size:8.3px;font-weight:400;color:#2a2a2a;font-style:normal;transform:scaleX(0.9346);-webkit-text-stroke:0.2px #2a2a2a;'>FirstOrder</span>
<span class='t' style='left:431.80px;top:336.85px;font-size:8.3px;font-weight:400;color:#2a2a2a;font-style:normal;transform:scaleX(0.9391);-webkit-text-stroke:0.2px #2a2a2a;'>tblCustomers</span>
<span class='t' style='left:508.10px;top:327.15px;font-size:8.3px;font-weight:400;color:#2a2a2a;font-style:normal;transform:scaleX(0.8991);-webkit-text-stroke:0.2px #2a2a2a;'>CustID</span>
<span class='t' style='left:508.10px;top:336.85px;font-size:8.3px;font-weight:400;color:#2a2a2a;font-style:normal;transform:scaleX(0.9758);-webkit-text-stroke:0.2px #2a2a2a;'>tblOrders</span>
<span class='t' style='left:508.10px;top:366.25px;font-size:8.3px;font-weight:400;color:#2a2a2a;font-style:normal;transform:scaleX(0.9583);-webkit-text-stroke:0.2px #2a2a2a;'>Is Null</span>
<span class='t' style='left:5.20px;top:487.69px;font-size:8px;font-weight:400;color:#4a4a4a;font-style:normal;transform:scaleX(0.9450);-webkit-text-stroke:0.15px #4a4a4a;'>Form View</span>
<span class='t' style='left:469.60px;top:487.89px;font-size:8px;font-weight:400;color:#4a4a4a;font-style:normal;transform:scaleX(0.9329);-webkit-text-stroke:0.15px #4a4a4a;'>Num Lock</span>
<span class='t' style='left:548.35px;top:488.07px;font-size:6px;font-weight:400;color:#555;font-style:normal;transform:scaleX(0.8198);-webkit-text-stroke:0.15px #555;'>SQL</span>
</div>
</body></html>
